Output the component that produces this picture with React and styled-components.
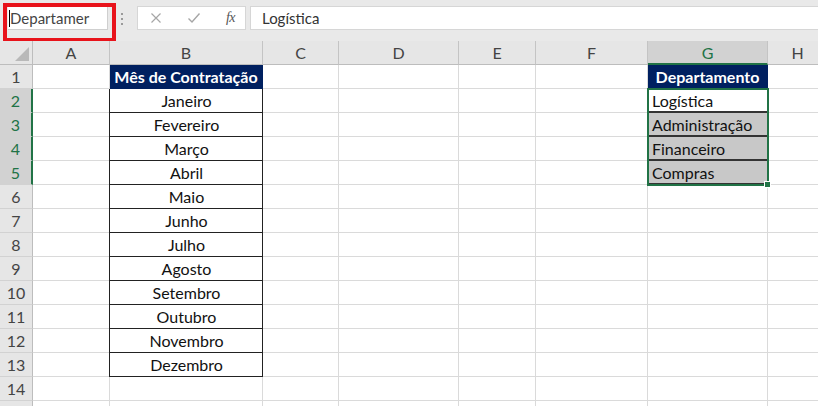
import React from 'react';
import styled, { createGlobalStyle, css } from 'styled-components';

const GlobalStyle = createGlobalStyle`
  html, body {
    margin: 0;
    padding: 0;
    background: #ffffff;
    overflow: hidden;
  }
  body {
    font-family: Lato, "Open Sans", "Liberation Sans", sans-serif;
  }
`

const FONT = `Lato, "Open Sans", "Liberation Sans", sans-serif`;
const GREEN = '#217346';
const NAVY = '#002060';

const Page = styled.div`
  width: 818px;
  height: 406px;
  overflow: hidden;
  background: #ffffff;
`

const TopBar = styled.div`
  display: flex;
  align-items: flex-start;
  height: 41px;
  background: #e9e9e9;
`

const RedFrame = styled.div`
  box-sizing: border-box;
  margin: 3px 0 0 3px;
  width: 113px;
  height: 39px;
  border: 4px solid #e8131b;
  background: #e9e9e9;
`

const NameBox = styled.div`
  box-sizing: border-box;
  margin-left: 1px;
  width: 100px;
  height: 23px;
  background: #ffffff;
  border-right: 1px solid #cfcfcf;
  border-bottom: 1px solid #cfcfcf;
  display: flex;
  align-items: center;
  padding-left: 1px;
  font-family: ${FONT};
  font-size: 15px;
  color: #444;
`

const Caret = styled.span`
  display: inline-block;
  width: 1px;
  height: 17px;
  background: #000;
`

const Dots = styled.div`
  width: 12px;
  margin-top: 13px;
  display: flex;
  flex-direction: column;
  align-items: center;
  gap: 3px;

  span {
    width: 2px;
    height: 2px;
    background: #9a9a9a;
  }
`

const FxBox = styled.div`
  box-sizing: border-box;
  margin: 6px 0 0 9px;
  width: 109px;
  height: 24px;
  background: #ffffff;
  border: 1px solid #d6d6d6;
  display: flex;
  align-items: center;
  justify-content: space-between;
  padding: 0 10px 0 12px;
`

const FxLabel = styled.span`
  font-family: "Liberation Serif", serif;
  font-style: italic;
  font-size: 14px;
  color: #555;
  letter-spacing: -0.5px;
`

const Formula = styled.div`
  box-sizing: border-box;
  margin: 6px 0 0 4px;
  flex: 1;
  height: 24px;
  background: #ffffff;
  border: 1px solid #d6d6d6;
  border-right: none;
  display: flex;
  align-items: center;
  padding-left: 11px;
  font-family: ${FONT};
  font-size: 15px;
  color: #333;
`

const Sheet = styled.div`
  position: relative;
  display: grid;
  grid-template-columns: 33px 77px 153px 76px 120px 77px 112px 120px 60px;
  grid-auto-rows: 24px;
`

const Corner = styled.div`
  box-sizing: border-box;
  background: #e6e6e6;
  border-right: 1px solid #bdbdbd;
  border-bottom: 1px solid #bdbdbd;
  display: flex;
  align-items: flex-end;
  justify-content: flex-end;
  padding: 0 3px 3px 0;
`

const ColHead = styled.div`
  box-sizing: border-box;
  background: ${p => (p.$picked ? '#d2d2d2' : '#e6e6e6')};
  color: ${p => (p.$picked ? GREEN : '#444')};
  border-right: 1px solid #c4c4c4;
  border-bottom: ${p => (p.$picked ? `2px solid ${GREEN}` : '1px solid #bdbdbd')};
  display: flex;
  align-items: center;
  justify-content: center;
  font-family: ${FONT};
  font-size: 16px;
`

const RowHead = styled.div`
  box-sizing: border-box;
  background: ${p => (p.$picked ? '#d2d2d2' : '#e6e6e6')};
  color: ${p => (p.$picked ? GREEN : '#444')};
  border-right: ${p => (p.$picked ? `2px solid ${GREEN}` : '1px solid #bdbdbd')};
  border-bottom: 1px solid #d2d2d2;
  display: flex;
  align-items: center;
  justify-content: center;
  font-family: ${FONT};
  font-size: 16px;
`

const variants = {
  plain: css`
    background: #ffffff;
  `,
  title: css`
    background: ${NAVY};
    color: #ffffff;
    font-weight: 700;
    justify-content: center;
    padding: 0;
    border-right-color: ${NAVY};
    border-bottom-color: ${NAVY};
  `,
  boxed: css`
    background: #ffffff;
    justify-content: center;
    border-right-color: #222;
    border-bottom-color: #222;
    box-shadow: -1px 0 0 #222;
  `,
  list: css`
    background: #ffffff;
    border-bottom: 2px solid #333;
  `,
  shaded: css`
    background: #c8c8c8;
    border-bottom: 2px solid #333;
  `,
};

const Cell = styled.div`
  box-sizing: border-box;
  border-right: 1px solid #dadada;
  border-bottom: 1px solid #dadada;
  display: flex;
  align-items: center;
  padding: 0 3px 0 4px;
  white-space: nowrap;
  overflow: hidden;
  font-family: ${FONT};
  font-size: 16px;
  color: #111;
  ${p => variants[p.$kind || 'plain']}
`

const Selection = styled.div`
  position: absolute;
  left: 647px;
  top: 47px;
  width: 122px;
  height: 98px;
  box-sizing: border-box;
  border: 2px solid ${GREEN};
  pointer-events: none;
`

const Handle = styled.div`
  position: absolute;
  right: -4px;
  bottom: -4px;
  width: 5px;
  height: 5px;
  background: ${GREEN};
  border: 1px solid #ffffff;
`

const columns = ['A', 'B', 'C', 'D', 'E', 'F', 'G', 'H'];

const months = [
  'Janeiro', 'Fevereiro', 'Março', 'Abril', 'Maio', 'Junho',
  'Julho', 'Agosto', 'Setembro', 'Outubro', 'Novembro', 'Dezembro',
];

const departments = ['Logística', 'Administração', 'Financeiro', 'Compras'];

function cellFor(row, col) {
  if (col === 'B') {
    if (row === 1) return { kind: 'title', text: 'Mês de Contratação' };
    if (row <= 13) return { kind: 'boxed', text: months[row - 2] };
  }
  if (col === 'G') {
    if (row === 1) return { kind: 'title', text: 'Departamento' };
    if (row === 2) return { kind: 'list', text: departments[0] };
    if (row <= 5) return { kind: 'shaded', text: departments[row - 2] };
  }
  return { kind: 'plain', text: '' };
}

function XIcon() {
  return (
    <svg width="12" height="12" viewBox="0 0 12 12">
      <path d="M1.5 1.5 L10.5 10.5 M10.5 1.5 L1.5 10.5" stroke="#a6a6a6" strokeWidth="1.2" fill="none" />
    </svg>
  );
}

function CheckIcon() {
  return (
    <svg width="14" height="12" viewBox="0 0 14 12">
      <path d="M1.5 6.5 L5 10 L12.5 1.5" stroke="#a6a6a6" strokeWidth="1.4" fill="none" />
    </svg>
  );
}

function SelectAll() {
  return (
    <svg width="14" height="14" viewBox="0 0 14 14">
      <polygon points="14,0 14,14 0,14" fill="#b9b9b9" />
    </svg>
  );
}

export default function App() {
  const rows = Array.from({ length: 15 }, (_, i) => i + 1);

  return (
    <Page>
      <GlobalStyle />
      <TopBar>
        <RedFrame>
          <NameBox><Caret />Departamer</NameBox>
        </RedFrame>
        <Dots><span /><span /><span /></Dots>
        <FxBox>
          <XIcon />
          <CheckIcon />
          <FxLabel>fx</FxLabel>
        </FxBox>
        <Formula>Logística</Formula>
      </TopBar>
      <Sheet>
        <Corner><SelectAll /></Corner>
        {columns.map(c => (
          <ColHead key={c} $picked={c === 'G'}>{c}</ColHead>
        ))}
        {rows.map(r => (
          <React.Fragment key={r}>
            <RowHead $picked={r >= 2 && r <= 5}>{r <= 14 ? r : ''}</RowHead>
            {columns.map(c => {
              const cell = cellFor(r, c);
              return <Cell key={c} $kind={cell.kind}>{cell.text}</Cell>;
            })}
          </React.Fragment>
        ))}
        <Selection><Handle /></Selection>
      </Sheet>
    </Page>
  );
}
